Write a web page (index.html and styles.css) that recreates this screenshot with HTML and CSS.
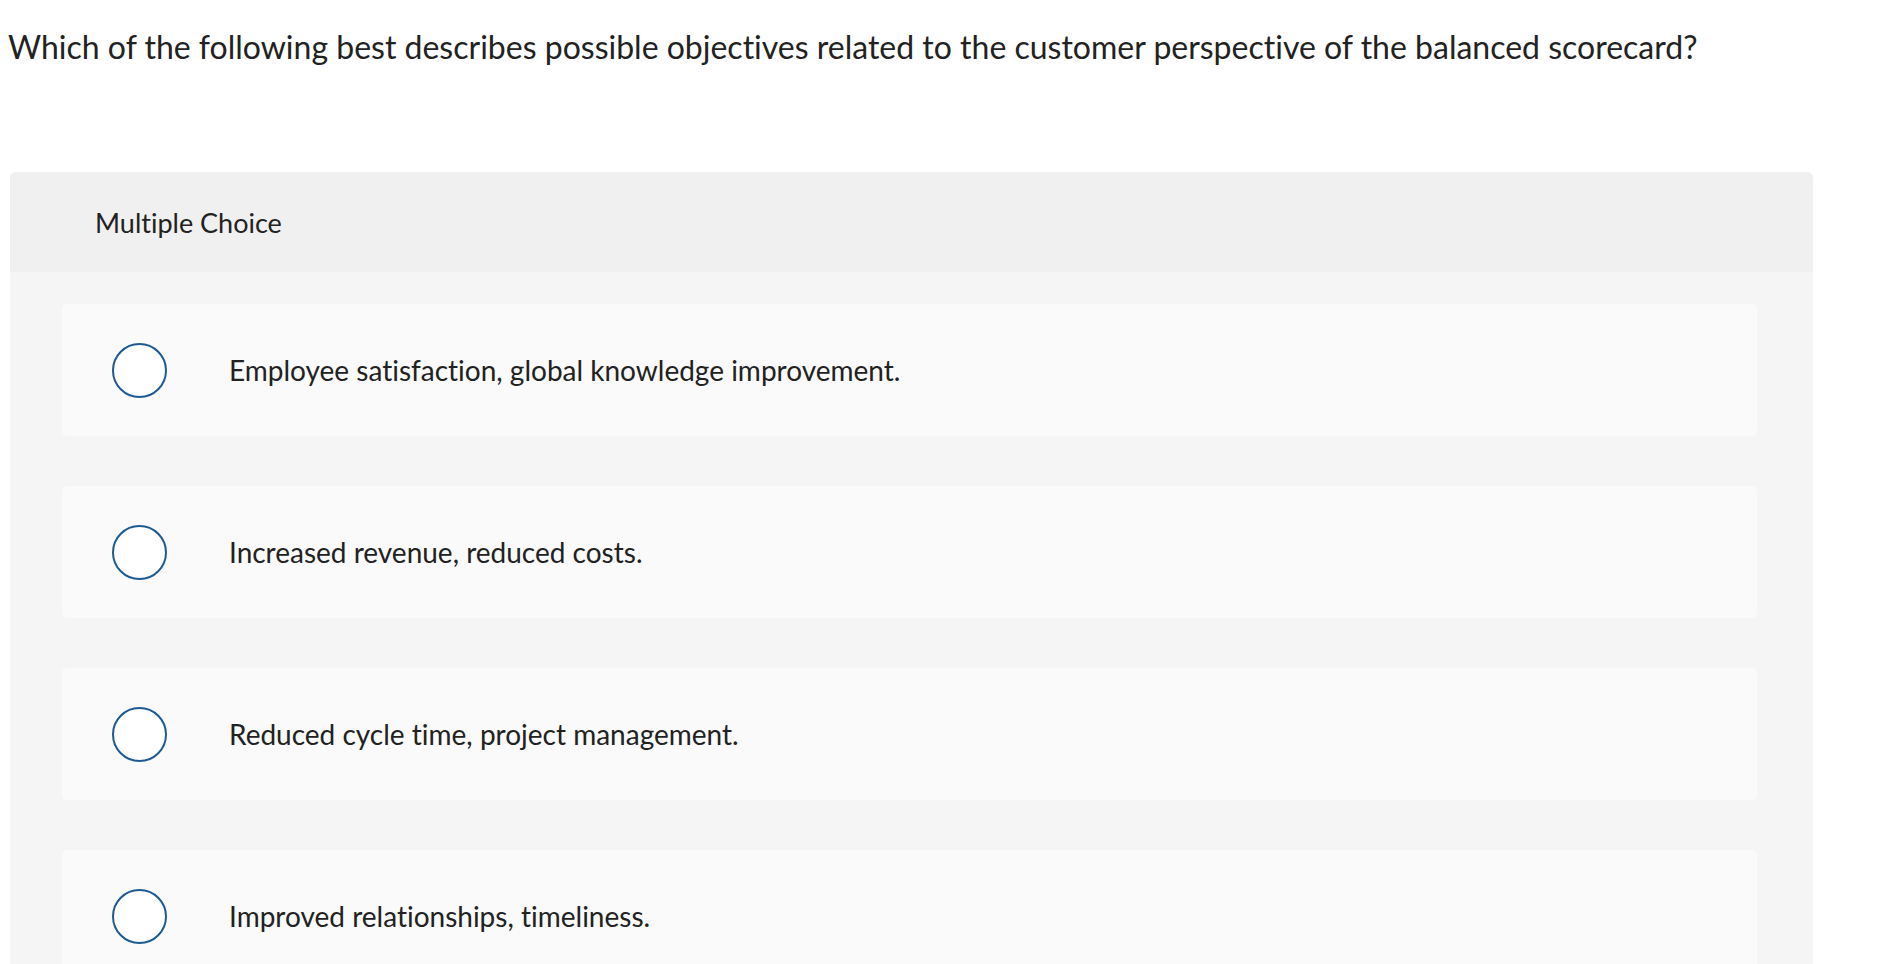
FILE: index.html
```html
<!DOCTYPE html>
<html lang="en">
<head>
<meta charset="utf-8">
<title>Multiple Choice</title>
<link rel="stylesheet" href="styles.css">
</head>
<body>
<p class="question">Which of the following best describes possible objectives related to the customer perspective of the balanced scorecard?</p>
<section class="panel">
  <div class="panel-header">Multiple Choice</div>
  <div class="panel-body">
    <div class="option"><span class="radio"></span><span class="option-text">Employee satisfaction, global knowledge improvement.</span></div>
    <div class="option"><span class="radio"></span><span class="option-text">Increased revenue, reduced costs.</span></div>
    <div class="option"><span class="radio"></span><span class="option-text">Reduced cycle time, project management.</span></div>
    <div class="option"><span class="radio"></span><span class="option-text">Improved relationships, timeliness.</span></div>
  </div>
</section>
</body>
</html>
```
FILE: styles.css
```css
html, body {
  background: #ffffff;
}
body {
  margin: 8px;
  font-family: Lato, "Liberation Sans", sans-serif;
  font-variant-ligatures: none;
  color: #222222;
}
.question {
  margin: 0;
  padding-top: 20px;
  font-size: 32px;
  line-height: 38px;
}
.panel {
  margin: 106px 61px 0 2px;
  background: #f5f5f5;
  border-radius: 6px 6px 0 0;
}
.panel-header {
  height: 100px;
  display: flex;
  align-items: center;
  padding-left: 85px;
  background: #f0f0f0;
  border-radius: 6px 6px 0 0;
  font-size: 27px;
}
.panel-body {
  padding: 32px 56px 40px 52px;
  display: flex;
  flex-direction: column;
  gap: 50px;
}
.option {
  height: 132px;
  display: flex;
  align-items: center;
  padding-left: 50px;
  background: #fafafa;
  border-radius: 5px;
}
.radio {
  box-sizing: border-box;
  width: 55px;
  height: 55px;
  border: 2px solid #1e5a92;
  border-radius: 50%;
  background: #ffffff;
  flex: none;
}
.option-text {
  margin-left: 62px;
  font-size: 28px;
}
```
